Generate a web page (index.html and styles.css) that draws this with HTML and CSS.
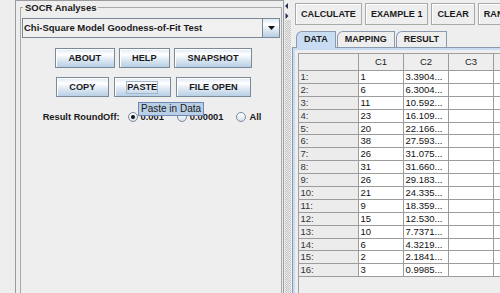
FILE: index.html
```html
<!DOCTYPE html>
<html lang="en">
<head>
    <meta charset="UTF-8">
    <meta name="viewport" content="width=device-width, initial-scale=1.0">
    <title>SOCR Analyses - Chi-Square Model Goodness-of-Fit Test</title>
    <link rel="stylesheet" href="styles.css">
</head>
<body>

<div class="app">

    <div class="left-pane">
        <div class="outer-box">
            <fieldset class="analyses">
                <legend>SOCR Analyses</legend>

                <div class="combo">
                    <span class="combo-text">Chi-Square Model Goodness-of-Fit Test</span>
                    <span class="combo-arrow">
                        <svg width="7" height="4" viewBox="0 0 7 4"><polygon points="0,0 7,0 3.5,4" fill="#111"/></svg>
                    </span>
                </div>

                <div class="button-row">
                    <button class="btn">ABOUT</button>
                    <button class="btn">HELP</button>
                    <button class="btn">SNAPSHOT</button>
                </div>

                <div class="button-row second">
                    <button class="btn">COPY</button>
                    <button class="btn"><span class="focus-ring">PASTE</span></button>
                    <button class="btn">FILE OPEN</button>
                </div>

                <div class="roundoff">
                    <span class="roundoff-label">Result RoundOff:</span>
                    <label class="radio first"><span class="radio-icon checked"></span>0.001</label>
                    <label class="radio"><span class="radio-icon"></span>0.00001</label>
                    <label class="radio"><span class="radio-icon"></span>All</label>
                </div>
            </fieldset>
        </div>
    </div>

    <div class="splitter">
        <svg class="splitter-arrows" width="8" height="20" viewBox="0 0 8 20">
            <polygon points="1,6 4,3 4,9" fill="#23304f"/>
            <polygon points="1.5,13 4.5,16 1.5,19" fill="#23304f"/>
        </svg>
        <div class="bumps"></div>
    </div>

    <div class="right-pane">
        <div class="toolbar">
            <button class="tool-btn">CALCULATE</button>
            <button class="tool-btn">EXAMPLE 1</button>
            <button class="tool-btn">CLEAR</button>
            <button class="tool-btn">RANDOM EXAMPLE</button>
        </div>

        <div class="tabs">
            <div class="tab selected">DATA</div>
            <div class="tab">MAPPING</div>
            <div class="tab">RESULT</div>
        </div>

        <div class="tab-content">
            <div class="scroll-pane">
                <div class="grid">
                    <div class="cell head"></div>
                    <div class="cell head">C1</div>
                    <div class="cell head">C2</div>
                    <div class="cell head">C3</div>
                    <div class="cell head">C4</div>

                    <div class="cell row-head">1:</div><div class="cell">1</div><div class="cell">3.3904...</div><div class="cell"></div><div class="cell"></div>
                    <div class="cell row-head">2:</div><div class="cell">6</div><div class="cell">6.3004...</div><div class="cell"></div><div class="cell"></div>
                    <div class="cell row-head">3:</div><div class="cell">11</div><div class="cell">10.592...</div><div class="cell"></div><div class="cell"></div>
                    <div class="cell row-head">4:</div><div class="cell">23</div><div class="cell">16.109...</div><div class="cell"></div><div class="cell"></div>
                    <div class="cell row-head">5:</div><div class="cell">20</div><div class="cell">22.166...</div><div class="cell"></div><div class="cell"></div>
                    <div class="cell row-head">6:</div><div class="cell">38</div><div class="cell">27.593...</div><div class="cell"></div><div class="cell"></div>
                    <div class="cell row-head">7:</div><div class="cell">26</div><div class="cell">31.075...</div><div class="cell"></div><div class="cell"></div>
                    <div class="cell row-head">8:</div><div class="cell">31</div><div class="cell">31.660...</div><div class="cell"></div><div class="cell"></div>
                    <div class="cell row-head">9:</div><div class="cell">26</div><div class="cell">29.183...</div><div class="cell"></div><div class="cell"></div>
                    <div class="cell row-head">10:</div><div class="cell">21</div><div class="cell">24.335...</div><div class="cell"></div><div class="cell"></div>
                    <div class="cell row-head">11:</div><div class="cell">9</div><div class="cell">18.359...</div><div class="cell"></div><div class="cell"></div>
                    <div class="cell row-head">12:</div><div class="cell">15</div><div class="cell">12.530...</div><div class="cell"></div><div class="cell"></div>
                    <div class="cell row-head">13:</div><div class="cell">10</div><div class="cell">7.7371...</div><div class="cell"></div><div class="cell"></div>
                    <div class="cell row-head">14:</div><div class="cell">6</div><div class="cell">4.3219...</div><div class="cell"></div><div class="cell"></div>
                    <div class="cell row-head">15:</div><div class="cell">2</div><div class="cell">2.1841...</div><div class="cell"></div><div class="cell"></div>
                    <div class="cell row-head">16:</div><div class="cell">3</div><div class="cell">0.9985...</div><div class="cell"></div><div class="cell"></div>
                </div>
            </div>
        </div>
    </div>

    <div class="tooltip">Paste in Data</div>

</div>

</body>
</html>
```

FILE: styles.css
```css
* {
    margin: 0;
    padding: 0;
    box-sizing: border-box;
}

body {
    font-family: "Liberation Sans", Arial, sans-serif;
    background-color: #eeeeee;
    color: #1a1a1a;
    width: 500px;
    height: 293px;
    overflow: hidden;
}

.app {
    display: flex;
    height: 293px;
    position: relative;
    overflow: hidden;
}

/* left side */

.left-pane {
    width: 284px;
    flex: none;
    padding-left: 15px;
}

.outer-box {
    height: 100%;
    border: 1px solid #9a9a9a;
    border-bottom: none;
    padding: 1px 1px 0 4px;
}

.analyses {
    height: 320px;
    border: 1px solid #a8a8a8;
    padding: 0 1px;
    min-width: 0;
}

.analyses legend {
    font-weight: bold;
    font-size: 9.5px;
    line-height: 11px;
    margin-left: 1px;
    padding: 0 2px;
    color: #1a1a1a;
}

.combo {
    display: flex;
    height: 20px;
    margin-top: 5px;
    border: 1px solid #7a8a99;
    background-color: #f0f0f0;
}

.combo-text {
    flex: 1;
    padding-left: 1px;
    font-weight: bold;
    font-size: 9.5px;
    line-height: 18px;
    white-space: nowrap;
    overflow: hidden;
}

.combo-arrow {
    width: 17px;
    display: flex;
    align-items: center;
    justify-content: center;
    border-left: 1px solid #7a8a99;
    background: linear-gradient(#dde8f3 0%, #ffffff 30%, #dde8f3 60%, #b8cfe5 100%);
}

.button-row {
    display: flex;
    justify-content: center;
    gap: 4px;
    margin-top: 10px;
    padding-left: 5px;
}

.button-row.second {
    gap: 5px;
    margin-top: 9px;
}

.btn {
    height: 20px;
    padding: 0 12.5px;
    border: 1px solid #7a8a99;
    background: linear-gradient(#dde8f3 0%, #ffffff 30%, #dde8f3 60%, #b8cfe5 100%);
    box-shadow: inset 1px 1px 0 #ffffff;
    font-family: inherit;
    font-weight: bold;
    font-size: 9.2px;
    color: #1a1a1a;
    white-space: nowrap;
}

.focus-ring {
    display: inline-block;
    line-height: 11px;
    outline: 1px solid #a3b8cc;
    outline-offset: 0;
}

.roundoff {
    display: flex;
    justify-content: center;
    align-items: center;
    height: 14px;
    margin-top: 13px;
    padding-left: 2px;
    font-weight: bold;
    font-size: 9.3px;
}

.radio {
    display: flex;
    align-items: center;
    gap: 3px;
    margin-left: 13px;
}

.radio.first {
    margin-left: 8px;
}

.radio-icon {
    width: 10px;
    height: 10px;
    border: 1px solid #7a8a99;
    border-radius: 50%;
    background: linear-gradient(#ffffff, #d6e2ee);
    display: flex;
    align-items: center;
    justify-content: center;
}

.radio-icon.checked::after {
    content: "";
    width: 4px;
    height: 4px;
    border-radius: 50%;
    background-color: #111111;
}

.tooltip {
    position: absolute;
    left: 138px;
    top: 102px;
    height: 14px;
    padding: 0 2px;
    border: 1px solid #6e87b5;
    background-color: #b8cfe5;
    font-size: 10px;
    line-height: 12px;
    color: #1a1a1a;
    white-space: nowrap;
}

/* split pane divider */

.splitter {
    width: 8px;
    flex: none;
    display: flex;
    flex-direction: column;
}

.splitter-arrows {
    display: block;
    flex: none;
}

.bumps {
    flex: 1;
    background: repeating-conic-gradient(#c2c2c2 0 25%, #eeeeee 0 50%) 0 0 / 2px 2px;
    margin: 0 1px;
}

/* right side */

.right-pane {
    flex: 1;
    min-width: 0;
    padding-top: 3px;
    overflow: hidden;
    display: flex;
    flex-direction: column;
}

.toolbar {
    display: flex;
    gap: 3px;
    padding-left: 3px;
}

.tool-btn {
    flex: none;
    height: 22px;
    padding: 0 5px;
    border: 1px solid #a9a9a9;
    background-color: #eeeeee;
    box-shadow: inset 1px 1px 0 #ffffff;
    font-family: inherit;
    font-weight: bold;
    font-size: 9.1px;
    color: #1a1a1a;
    white-space: nowrap;
}

.tabs {
    display: flex;
    align-items: flex-end;
    gap: 1px;
    height: 16px;
    margin-top: 6px;
    padding-left: 4px;
    position: relative;
    z-index: 1;
}

.tab {
    height: 16px;
    padding: 0 7px;
    border: 1px solid #8a9bae;
    border-bottom: none;
    border-top-left-radius: 6px;
    font-weight: bold;
    font-size: 9px;
    line-height: 15px;
    color: #1a1a1a;
}

.tab.selected {
    height: 17px;
    margin-bottom: -1px;
    background-color: #c8ddf2;
}

.tab-content {
    flex: 1;
    border-top: 1px solid #8a9bae;
    border-left: 1px solid #8a9bae;
    box-shadow: inset 2px 2px 0 #c8ddf2;
    padding: 5px 0 0 5px;
}

.scroll-pane {
    height: 100%;
    border: 1px solid #a0a0a0;
    border-right: none;
    border-bottom: none;
    overflow: hidden;
}

.grid {
    display: grid;
    grid-template-columns: 60px 45px 45px 45px 45px;
    grid-template-rows: 17px repeat(16, 12.9px);
}

.cell {
    border-right: 1px solid #9c9c9c;
    border-bottom: 1px solid #9c9c9c;
    background-color: #ffffff;
    font-size: 9.5px;
    line-height: 12px;
    padding-left: 1.5px;
    white-space: nowrap;
    overflow: hidden;
    color: #111111;
}

.cell.head {
    background-color: #eeeeee;
    text-align: center;
    line-height: 16px;
    padding-left: 0;
    color: #222222;
}

.cell.row-head {
    background-color: #ececec;
    color: #333333;
}
```
